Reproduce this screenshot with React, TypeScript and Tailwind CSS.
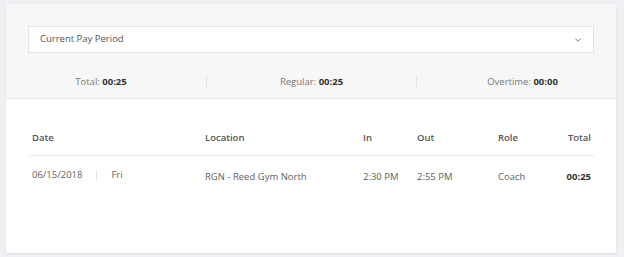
import { ChevronDown } from 'lucide-react';

const rows = [
  {
    date: '06/15/2018',
    day: 'Fri',
    location: 'RGN - Reed Gym North',
    timeIn: '2:30 PM',
    timeOut: '2:55 PM',
    role: 'Coach',
    total: '00:25',
  },
];

export default function App() {
  return (
    <div
      className="min-h-[257px] bg-[#eef0f4] pl-[6px] pr-[8px] pt-[4px] pb-[4px] text-[9.5px] text-[#606060]"
      style={{ fontFamily: '"Open Sans", "Liberation Sans", sans-serif' }}
    >
      <div className="h-[249px] bg-white shadow-[0_1px_2px_rgba(0,0,0,0.08)] overflow-hidden">
        {/* Filter + summary */}
        <div className="bg-[#f7f7f7] border-b border-[#e6e6e6]">
          <div className="px-[22px] pt-[22px]">
            <div className="h-[27px] bg-white border border-[#e3e3e3] flex items-center justify-between pl-[11px] pr-[10px]">
              <span className="text-[#555]">Current Pay Period</span>
              <ChevronDown className="w-[10px] h-[10px] text-[#666] mt-[1px]" strokeWidth={2} />
            </div>
          </div>
          <div className="flex pt-[22px] pb-[9px] text-[#777]">
            <div className="w-[200px] pr-[10px] h-[14px] flex items-center justify-center">
              Total:&nbsp;<b className="text-[#333] font-bold">00:25</b>
            </div>
            <div className="w-[210px] h-[14px] border-l border-[#e3e3e3] flex items-center justify-center">
              Regular:&nbsp;<b className="text-[#333] font-bold">00:25</b>
            </div>
            <div className="flex-1 pl-[12px] h-[14px] border-l border-[#e3e3e3] flex items-center justify-center">
              Overtime:&nbsp;<b className="text-[#333] font-bold">00:00</b>
            </div>
          </div>
        </div>

        {/* Punches table */}
        <div className="px-[22px]">
          <div className="grid grid-cols-[173px_158px_54px_81px_1fr_auto] leading-[15px] font-semibold text-[#555] pt-[31px] pb-[10px] border-b border-[#ececec]">
            <div className="pl-[4px]">Date</div>
            <div className="pl-[4px]">Location</div>
            <div className="pl-[4px]">In</div>
            <div className="pl-[4px]">Out</div>
            <div className="pl-[4px]">Role</div>
            <div className="pr-[3px] text-right">Total</div>
          </div>
          {rows.map((r) => (
            <div
              key={r.date}
              className="grid grid-cols-[173px_158px_54px_81px_1fr_auto] leading-[15px]"
            >
              <div className="pl-[4px] pt-[9px] flex items-center">
                <span>{r.date}</span>
                <span className="mx-[14px] h-[10px] border-l border-[#e3e3e3]" />
                <span>{r.day}</span>
              </div>
              <div className="pl-[4px] pt-[13px]">{r.location}</div>
              <div className="pl-[4px] pt-[13px]">{r.timeIn}</div>
              <div className="pl-[4px] pt-[13px]">{r.timeOut}</div>
              <div className="pl-[4px] pt-[13px]">{r.role}</div>
              <div className="pr-[3px] pt-[13px] text-right font-bold text-[#333]">{r.total}</div>
            </div>
          ))}
        </div>
      </div>
    </div>
  );
}
